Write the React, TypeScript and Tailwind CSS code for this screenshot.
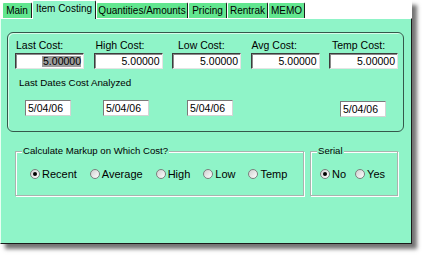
import React from "react";

const tabs = [
  { label: "Main", cls: "w-[30px]" },
  { label: "Item Costing", cls: "w-[64px]", active: true },
  { label: "Quantities/Amounts", cls: "w-[92px]" },
  { label: "Pricing", cls: "w-[39px]" },
  { label: "Rentrak", cls: "w-[41px]" },
  { label: "MEMO", cls: "w-[37px]" },
];

const costs = [
  { label: "Last Cost:", pad: "pl-[1px]", selected: true },
  { label: "High Cost:", pad: "pl-[2px]" },
  { label: "Low Cost:", pad: "pl-[6px]" },
  { label: "Avg Cost:", pad: "pl-[1px]" },
  { label: "Temp Cost:", pad: "pl-[3px]" },
];

function Radio({ label, checked }: { label: string; checked?: boolean }) {
  return (
    <div className="flex items-center gap-[2px]">
      <span className="flex h-[10px] w-[10px] items-center justify-center rounded-full border border-[#7d7d7d] bg-gradient-to-br from-[#cfcfcf] to-white">
        {checked && <span className="h-[4px] w-[4px] rounded-full bg-black" />}
      </span>
      <span className="text-[11px] leading-[12px]">{label}</span>
    </div>
  );
}

function DateBox({ className = "" }: { className?: string }) {
  return (
    <div
      className={`flex h-[16px] w-[46px] items-center border border-[#7a7a7a] border-b-[#d4d4d4] border-r-[#d4d4d4] bg-white pl-[2px] text-[10.5px] leading-[12px] ${className}`}
    >
      5/04/06
    </div>
  );
}

export default function App() {
  return (
    <div className="h-[255px] w-[422px] bg-white font-['Liberation_Sans',Arial,sans-serif] text-black">
      <div className="flex h-[244px] w-[412px] flex-col bg-white shadow-[5px_5px_4px_rgba(0,0,0,0.55)]">
        {/* tab strip */}
        <div className="flex h-[18px] items-end pl-[2px]">
          {tabs.map((t) =>
            t.active ? (
              <div
                key={t.label}
                className={`relative z-10 -mb-px flex h-[19px] items-start justify-center rounded-t-[2px] border-l border-t border-r border-l-white border-t-white border-r-[#1c1c1c] bg-[#8ff4c8] pt-[2px] text-[10px] leading-[12px] ${t.cls}`}
              >
                {t.label}
              </div>
            ) : (
              <div
                key={t.label}
                className={`flex h-[16px] items-center justify-center rounded-t-[2px] border-l border-t border-r border-l-white border-t-white border-r-[#1c1c1c] bg-[#62e68f] text-[10px] leading-[12px] ${t.cls}`}
              >
                {t.label}
              </div>
            )
          )}
        </div>

        {/* page */}
        <div className="flex flex-1 flex-col border-l border-t border-r border-b border-l-[#e8fff2] border-t-white border-r-[#1a1a1a] border-b-[#1a1a1a] bg-[#8ff4c8]">
          <div className="ml-[6px] mt-[13px] h-[100px] w-[397px] rounded-[6px] border border-[#35584b] pl-[7px] pt-[6px] shadow-[inset_1px_1px_0_#d6fde9]">
            <div className="grid grid-cols-[69px_69px_69px_69px_69px] gap-x-[9.5px]">
              {costs.map((c) => (
                <div key={c.label} className="flex flex-col">
                  <span className={`text-[10.5px] leading-[12px] ${c.pad}`}>{c.label}</span>
                  <div className="mt-[2px] flex h-[16px] items-center justify-end border border-b-[#e4e4e4] border-l-[#3c3c3c] border-r-[#e4e4e4] border-t-[#3c3c3c] bg-white pr-[2px] text-[10.5px] leading-[11px] shadow-[inset_1px_1px_0_#8a8a8a]">
                    {c.selected ? <span className="bg-[#9c9c9c] pl-px">5.00000</span> : "5.00000"}
                  </div>
                </div>
              ))}
            </div>
            <div className="mt-[8px] pl-[4px] text-[9.8px] leading-[12px]">Last Dates Cost Analyzed</div>
            <div className="mt-[11px] flex items-start">
              <DateBox className="ml-[10px]" />
              <DateBox className="ml-[32px]" />
              <DateBox className="ml-[38px]" />
              <DateBox className="ml-[107px] mt-px" />
            </div>
          </div>

          <div className="ml-[14px] mt-[19px] flex gap-[6px]">
            <div className="relative flex h-[45px] w-[289px] items-center gap-[13px] border border-[#a9b3ae] pl-[14px] shadow-[inset_1px_1px_0_#ffffff,1px_1px_0_#ffffff]">
              <span className="absolute -top-[7px] left-[6px] bg-[#8ff4c8] px-px text-[9.6px] leading-[12px]">
                Calculate Markup on Which Cost?
              </span>
              <Radio label="Recent" checked />
              <Radio label="Average" />
              <Radio label="High" />
              <Radio label="Low" />
              <Radio label="Temp" />
            </div>
            <div className="relative flex h-[45px] w-[88px] items-center gap-[9px] border border-[#a9b3ae] pl-[9px] shadow-[inset_1px_1px_0_#ffffff,1px_1px_0_#ffffff]">
              <span className="absolute -top-[7px] left-[6px] bg-[#8ff4c8] px-px text-[9.6px] leading-[12px]">
                Serial
              </span>
              <Radio label="No" checked />
              <Radio label="Yes" />
            </div>
          </div>
        </div>
      </div>
    </div>
  );
}
